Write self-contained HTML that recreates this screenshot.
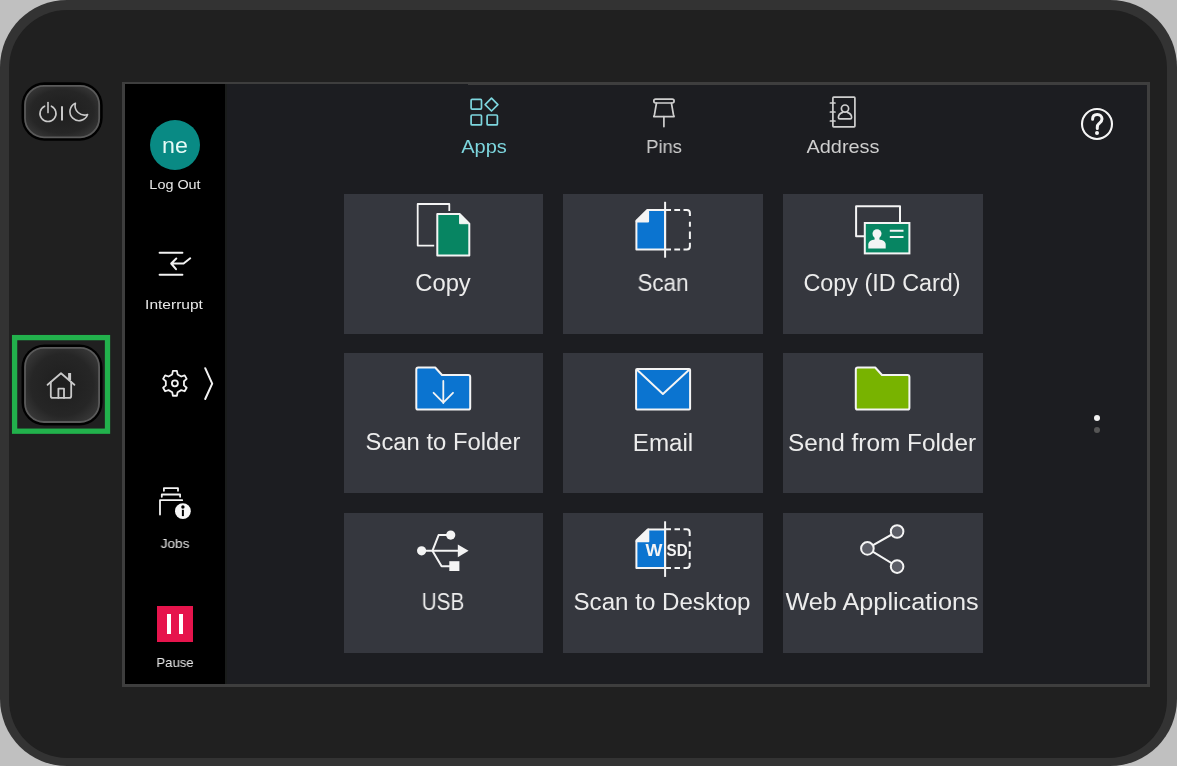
<!DOCTYPE html>
<html><head><meta charset="utf-8">
<style>
html,body{margin:0;padding:0;width:1177px;height:766px;overflow:hidden;background:#c0c0c0;font-family:"Liberation Sans",sans-serif;}
div,svg{position:absolute;}
#frame{left:0;top:0;width:1177px;height:766px;border-radius:67px;background:#333333;}
#inner{left:9px;top:10px;width:1158px;height:748px;border-radius:58px;background:#202020;}
#screen{left:122px;top:82px;width:1022px;height:600px;border-style:solid;border-color:#3e3e3e;border-width:2px 3px 3px 3px;background:#1c1d21;}
#side{left:125px;top:84px;width:100px;height:600px;background:#000;}
.tile{width:199.8px;height:139.9px;background:#35373e;}
.tx{white-space:nowrap;transform-origin:50% 50%;will-change:transform;}
svg{overflow:visible;}
</style></head>
<body>
<div id="frame"></div>
<div id="inner"></div>
<div id="screen"></div>
<div id="side"></div>
<div style="left:225px;top:84px;width:2px;height:600px;background:#1a1c1b;"></div>
<div style="left:468px;top:84px;width:679px;height:1px;background:#3e3e3e;"></div>
<div style="left:150px;top:120px;width:50px;height:50px;border-radius:50%;background:#098a84;"></div>
<div style="left:157px;top:606px;width:36px;height:36px;background:#e6144c;"></div>
<div style="left:167px;top:614px;width:4px;height:20px;background:#fff;"></div>
<div style="left:179px;top:614px;width:4px;height:20px;background:#fff;"></div>
<div class="tile" style="left:343.6px;top:193.7px;"></div>
<div class="tile" style="left:563.1px;top:193.7px;"></div>
<div class="tile" style="left:783px;top:193.7px;"></div>
<div class="tile" style="left:343.6px;top:353.3px;"></div>
<div class="tile" style="left:563.1px;top:353.3px;"></div>
<div class="tile" style="left:783px;top:353.3px;"></div>
<div class="tile" style="left:343.6px;top:513px;"></div>
<div class="tile" style="left:563.1px;top:513px;"></div>
<div class="tile" style="left:783px;top:513px;"></div>
<div style="left:1094px;top:415.3px;width:6px;height:6px;border-radius:50%;background:#f2f2f2;"></div>
<div style="left:1094px;top:427.3px;width:6px;height:6px;border-radius:50%;background:#555;"></div>
<div class="tx" style="left:442.80px;top:271.83px;font-size:23px;line-height:23px;color:#ececec;transform:translateX(-50%) scaleX(1.0331);">Copy</div>
<div class="tx" style="left:663.20px;top:271.53px;font-size:23px;line-height:23px;color:#ececec;transform:translateX(-50%) scaleX(0.9721);">Scan</div>
<div class="tx" style="left:882.00px;top:271.83px;font-size:23px;line-height:23px;color:#ececec;transform:translateX(-50%) scaleX(1.0165);">Copy (ID Card)</div>
<div class="tx" style="left:442.70px;top:431.43px;font-size:23px;line-height:23px;color:#ececec;transform:translateX(-50%) scaleX(1.0349);">Scan to Folder</div>
<div class="tx" style="left:662.70px;top:431.53px;font-size:23px;line-height:23px;color:#ececec;transform:translateX(-50%) scaleX(1.0519);">Email</div>
<div class="tx" style="left:882.00px;top:431.53px;font-size:23px;line-height:23px;color:#ececec;transform:translateX(-50%) scaleX(1.0586);">Send from Folder</div>
<div class="tx" style="left:442.80px;top:591.13px;font-size:23px;line-height:23px;color:#ececec;transform:translateX(-50%) scaleX(0.9001);">USB</div>
<div class="tx" style="left:662.40px;top:591.43px;font-size:23px;line-height:23px;color:#ececec;transform:translateX(-50%) scaleX(1.0485);">Scan to Desktop</div>
<div class="tx" style="left:881.80px;top:591.43px;font-size:23px;line-height:23px;color:#ececec;transform:translateX(-50%) scaleX(1.0977);">Web Applications</div>
<div class="tx" style="left:484.40px;top:136.82px;font-size:19px;line-height:19px;color:#7dd6de;transform:translateX(-50%) scaleX(1.0529);">Apps</div>
<div class="tx" style="left:664.10px;top:136.82px;font-size:19px;line-height:19px;color:#cfcfcf;transform:translateX(-50%) scaleX(0.9637);">Pins</div>
<div class="tx" style="left:842.70px;top:136.82px;font-size:19px;line-height:19px;color:#cfcfcf;transform:translateX(-50%) scaleX(1.0474);">Address</div>
<div class="tx" style="left:174.90px;top:135.18px;font-size:22px;line-height:22px;color:#e6faf6;transform:translateX(-50%) scaleX(1.0551);">ne</div>
<div class="tx" style="left:174.90px;top:177.89px;font-size:13.6px;line-height:13.6px;color:#e8e8e8;transform:translateX(-50%) scaleX(1.0598);">Log Out</div>
<div class="tx" style="left:174.10px;top:298.49px;font-size:13.6px;line-height:13.6px;color:#e8e8e8;transform:translateX(-50%) scaleX(1.1421);">Interrupt</div>
<div class="tx" style="left:174.60px;top:536.89px;font-size:13.6px;line-height:13.6px;color:#e8e8e8;transform:translateX(-50%) scaleX(0.9982);">Jobs</div>
<div class="tx" style="left:175.30px;top:656.49px;font-size:13.6px;line-height:13.6px;color:#e8e8e8;transform:translateX(-50%) scaleX(0.9649);">Pause</div>
<!-- icons overlay -->
<svg style="left:0;top:0" width="1177" height="766" viewBox="0 0 1177 766">
<defs>
  <radialGradient id="btng" cx="50%" cy="50%" r="60%">
    <stop offset="0%" stop-color="#1e1e1e"/>
    <stop offset="70%" stop-color="#262626"/>
    <stop offset="100%" stop-color="#383838"/>
  </radialGradient>
</defs>
<!-- power button -->
<rect x="21.5" y="82.3" width="81.2" height="58.5" rx="23" fill="#000"/>
<rect x="25" y="85.8" width="74.2" height="51.5" rx="19" fill="url(#btng)" stroke="#5a5a5a" stroke-width="1.8"/>
<g fill="none" stroke="#c9c9c9" stroke-width="1.6" stroke-linecap="round">
  <path d="M44.6,106.2 A8,8 0 1 0 51.4,106.2"/>
  <path d="M48,102.6 V112.6"/>
  <path d="M62,106.3 V120.5" stroke-width="2" stroke-linecap="butt"/>
  <path d="M75.4,103.2 A9.1,9.1 0 1 0 87.6,114.6 A9.5,9.5 0 0 1 75.4,103.2 Z" stroke-linejoin="round"/>
</g>
<!-- home button -->
<rect x="14.6" y="337.6" width="92.9" height="93.6" fill="none" stroke="#22b14c" stroke-width="5.3"/>
<rect x="21.5" y="344.4" width="81.1" height="81.1" rx="23" fill="#000"/>
<rect x="25" y="347.9" width="74.1" height="74.1" rx="19" fill="url(#btng)" stroke="#5a5a5a" stroke-width="1.8"/>
<g fill="none" stroke="#c9c9c9" stroke-width="1.8" stroke-linejoin="round" stroke-linecap="round">
  <path d="M47.6,384.8 L61,373.3 L74.4,384.8"/>
  <path d="M50.8,382 V395.9 Q50.8,397.9 52.8,397.9 H69.2 Q71.2,397.9 71.2,395.9 V382"/>
  <path d="M58.4,397.9 V388.6 H64 V397.9"/>
  <path d="M69.6,380 V373" stroke-width="3" stroke-linecap="butt"/>
</g>
<!-- interrupt -->
<g fill="none" stroke="#f2f2f2" stroke-width="2" stroke-linecap="round" stroke-linejoin="round">
  <path d="M159.6,252.8 H182.4 M159.6,274.7 H182.4"/>
  <path d="M176.3,258.5 L171.2,263.5 L176,269.2 M171.2,263.5 H183.6 L190.2,258.3"/>
</g>
<!-- gear -->
<g fill="none" stroke="#f2f2f2" stroke-width="1.8" stroke-linejoin="round">
  <path d="M172.18,374.41 L172.89,370.86 L176.91,370.86 L177.62,374.41 L181.24,376.50 L184.66,375.34 L186.68,378.83 L183.96,381.21 L183.96,385.39 L186.68,387.77 L184.66,391.26 L181.24,390.10 L177.62,392.19 L176.91,395.74 L172.89,395.74 L172.18,392.19 L168.56,390.10 L165.14,391.26 L163.12,387.77 L165.84,385.39 L165.84,381.21 L163.12,378.83 L165.14,375.34 L168.56,376.50 Z"/>
  <circle cx="174.9" cy="383.3" r="3"/>
  <path d="M205.2,368.2 L212.2,383.6 L205.2,399" stroke-width="2" stroke-linecap="round"/>
</g>
<!-- jobs -->
<g fill="none" stroke="#f2f2f2" stroke-width="1.8" stroke-linecap="round" stroke-linejoin="round">
  <path d="M163.9,490.8 V488.2 H178 V490.8"/>
  <path d="M161.8,496.8 V494.5 H180.1 V496.8"/>
  <path d="M160,514.6 V500.2 H182.2"/>
</g>
<circle cx="182.9" cy="511.2" r="8.6" fill="#000"/>
<circle cx="182.9" cy="511.2" r="7.9" fill="#f6f6f6"/>
<circle cx="182.9" cy="507" r="1.7" fill="#000"/>
<rect x="181.9" y="509.8" width="2" height="6.3" fill="#000"/>
<!-- help -->
<circle cx="1097" cy="124" r="15" fill="none" stroke="#f5f5f5" stroke-width="2.1"/>
<path d="M1092.6,119.2 C1092.6,116.2 1094.6,114.6 1097.3,114.6 C1100.1,114.6 1102,116.4 1102,119 C1102,121.5 1100.4,122.5 1098.9,123.7 C1097.7,124.7 1097.3,125.5 1097.3,127.2 V128.6" fill="none" stroke="#f5f5f5" stroke-width="3" stroke-linecap="round"/><circle cx="1097" cy="133" r="2" fill="#f5f5f5"/>
<!-- apps icon -->
<g fill="none" stroke="#7dd6de" stroke-width="1.7" stroke-linejoin="round">
  <rect x="471.1" y="99.4" width="10.4" height="9.7" rx="1"/>
  <rect x="471.1" y="115" width="10.4" height="9.9" rx="1"/>
  <rect x="487.1" y="115" width="10.3" height="9.9" rx="1"/>
  <path d="M491.5,98.2 L497.9,104.6 L491.5,111 L485.1,104.6 Z"/>
</g>
<!-- pin icon -->
<g fill="none" stroke="#cfcfcf" stroke-width="1.7" stroke-linejoin="round" stroke-linecap="round">
  <rect x="653.8" y="99.2" width="20.3" height="3.8" rx="1.9"/>
  <path d="M656.5,103 L654.5,114.5 L653.8,116.6 H674.1 L673.4,114.5 L671.4,103"/>
  <path d="M663.9,116.6 V126.6"/>
</g>
<!-- address icon -->
<g fill="none" stroke="#cfcfcf" stroke-width="1.7" stroke-linejoin="round" stroke-linecap="round">
  <rect x="832.9" y="97.1" width="22" height="29.7" rx="0.8"/>
  <path d="M830.4,103 H835 M830.4,112 H835 M830.4,121 H835"/>
  <circle cx="845" cy="108.6" r="3.6"/>
  <path d="M842.6,112.4 C839.8,113.4 838.4,115.2 838.4,117.4 Q838.4,118.8 839.8,118.8 H850.2 Q851.6,118.8 851.6,117.4 C851.6,115.2 850.2,113.4 847.4,112.4"/>
</g>
</svg>
<svg style="left:0;top:0;will-change:transform" width="1177" height="766" viewBox="0 0 1177 766">
<!-- COPY -->
<g fill="none" stroke="#f4f4f4" stroke-width="1.8" stroke-linejoin="round">
  <path d="M434.2,245.6 H417.7 V204 H449.3 V211"/>
</g>
<path d="M437.3,214 H459.6 L469.3,223.7 V255.5 H437.3 Z" fill="#078562" stroke="#f4f4f4" stroke-width="2" stroke-linejoin="round"/>
<path d="M459.6,214 V223.7 H469.3 Z" fill="#eef8f4" stroke="#f4f4f4" stroke-width="1" stroke-linejoin="round"/>
<!-- SCAN -->
<path d="M647.3,209.9 H665.1 V249.6 H636.4 V220.8 Z" fill="#0b74d0" stroke="#f4f4f4" stroke-width="2" stroke-linejoin="round"/>
<path d="M636.4,221.6 L648.3,209.9 V221.6 Z" fill="#f4f4f4" stroke="#f4f4f4" stroke-width="1.6" stroke-linejoin="round"/>
<g fill="none" stroke="#f4f4f4" stroke-width="2">
  <path d="M665.1,201.8 V257.7"/>
  <path d="M665.1,209.9 H671 M674.3,209.9 H680.1 M683.5,209.9 H686.8 Q689.9,209.9 689.9,213 V216 M689.9,221.8 V226.8 M689.9,231.4 V238.9 M689.9,242.7 V246.5 Q689.9,249.6 686.8,249.6 H683.5 M680.1,249.6 H674.3 M671,249.6 H665.1"/>
</g>
<!-- ID CARD -->
<path d="M864,236.2 H856.1 V206.2 H900 V222.5" fill="none" stroke="#f4f4f4" stroke-width="2" stroke-linejoin="round"/>
<rect x="864.8" y="223" width="44.6" height="30.4" fill="#078562" stroke="#f4f4f4" stroke-width="2"/>
<circle cx="877" cy="233.8" r="4.5" fill="#f4f4f4"/><rect x="874.6" y="236" width="4.8" height="4.5" fill="#f4f4f4"/>
<path d="M868.3,248.6 V244.5 C868.3,240.6 872.6,239.4 877,239.4 C881.4,239.4 885.7,240.6 885.7,244.5 V248.6 Z" fill="#f4f4f4"/>
<path d="M889.8,230.8 H903.5 M889.8,236.9 H903.5" stroke="#f4f4f4" stroke-width="2"/>
<!-- BLUE FOLDER -->
<path d="M418.3,367.5 H435.2 L442,375 H468.3 Q470.2,375 470.2,376.9 V407.7 Q470.2,409.6 468.3,409.6 H418.2 Q416.3,409.6 416.3,407.7 V369.5 Q416.3,367.5 418.3,367.5 Z" fill="#0b74d0" stroke="#f4f4f4" stroke-width="2" stroke-linejoin="round"/>
<path d="M443.3,381 V403 M433.6,392.8 L443.3,402.6 L453,392.8" fill="none" stroke="#f4f4f4" stroke-width="1.8" stroke-linejoin="round" stroke-linecap="round"/>
<!-- EMAIL -->
<rect x="636.1" y="369.1" width="54" height="40.5" rx="1" fill="#0b74d0" stroke="#f4f4f4" stroke-width="2"/>
<path d="M636.8,369.6 L662.9,394 L689.4,369.6" fill="none" stroke="#f4f4f4" stroke-width="2" stroke-linejoin="round"/>
<!-- GREEN FOLDER -->
<path d="M857.8,367.5 H875.2 L882,375 H907.5 Q909.4,375 909.4,376.9 V407.7 Q909.4,409.6 907.5,409.6 H857.7 Q855.8,409.6 855.8,407.7 V369.5 Q855.8,367.5 857.8,367.5 Z" fill="#78b300" stroke="#f4f4f4" stroke-width="2" stroke-linejoin="round"/>
<!-- USB -->
<g fill="none" stroke="#f4f4f4" stroke-width="2" stroke-linejoin="round">
  <path d="M421.5,550.8 H459"/>
  <path d="M432.4,550.8 L438.6,535.1 H450.7"/>
  <path d="M432.4,550.8 L441.6,566.2 H452"/>
</g>
<circle cx="421.6" cy="550.8" r="4.6" fill="#f4f4f4"/>
<circle cx="450.7" cy="535.1" r="4.6" fill="#f4f4f4"/>
<rect x="449.3" y="561.2" width="10.1" height="9.8" fill="#f4f4f4"/>
<path d="M457.8,544.6 L468.6,550.8 L457.8,557.2 Z" fill="#f4f4f4"/>
<!-- WSD -->
<path d="M647.8,529.4 H665.1 V568 H636.4 V540.5 Z" fill="#0b74d0" stroke="#f4f4f4" stroke-width="2" stroke-linejoin="round"/>
<path d="M636.4,541.5 L648.5,529.4 V541.5 Z" fill="#f4f4f4" stroke="#f4f4f4" stroke-width="1.6" stroke-linejoin="round"/>
<g fill="none" stroke="#f4f4f4" stroke-width="2">
  <path d="M665.1,521.3 V576.9"/>
  <path d="M665.1,529.3 H671 M674.5,529.3 H680 M683.5,529.3 H686.6 Q689.7,529.3 689.7,532.4 V536 M689.7,541.4 V546.8 M689.7,551 V559 M689.7,562.7 V565 Q689.7,568.1 686.6,568.1 H683.5 M680,568.1 H674.5 M671,568.1 H665.1"/>
</g>
<text x="645.4" y="556.2" textLength="16.9" lengthAdjust="spacingAndGlyphs" font-family="Liberation Sans" font-weight="bold" font-size="16.5" fill="#f4f4f4">W</text>
<text x="666.6" y="556.2" textLength="21" lengthAdjust="spacingAndGlyphs" font-family="Liberation Sans" font-weight="bold" font-size="16" fill="#f4f4f4">SD</text>
<!-- SHARE -->
<path d="M867.4,548.4 L897.1,531.5 M867.4,548.4 L897.1,566.6" stroke="#f4f4f4" stroke-width="2"/>
<g fill="#5b5d66" stroke="#f4f4f4" stroke-width="2">
  <circle cx="867.4" cy="548.4" r="6.3"/>
  <circle cx="897.1" cy="531.5" r="6.3"/>
  <circle cx="897.1" cy="566.6" r="6.3"/>
</g>
</svg>

</body></html>
